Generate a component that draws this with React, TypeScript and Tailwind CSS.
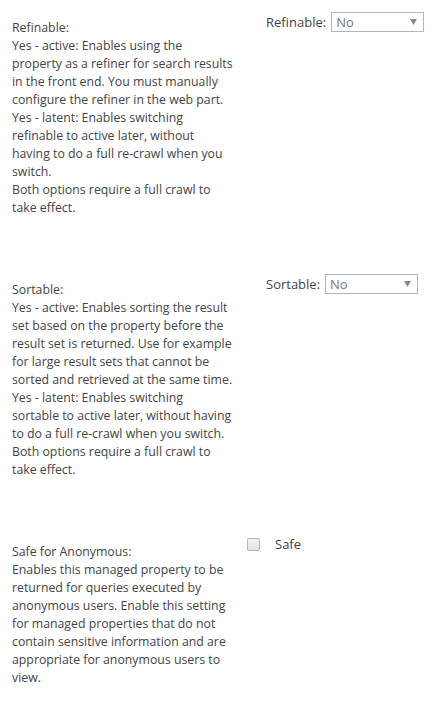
import React from "react";

const font = { fontFamily: '"Open Sans", "Segoe UI", sans-serif' };

const refinable = [
  "Refinable:",
  "Yes - active: Enables using the",
  "property as a refiner for search results",
  "in the front end. You must manually",
  "configure the refiner in the web part.",
  "Yes - latent: Enables switching",
  "refinable to active later, without",
  "having to do a full re-crawl when you",
  "switch.",
  "Both options require a full crawl to",
  "take effect.",
];

const sortable = [
  "Sortable:",
  "Yes - active: Enables sorting the result",
  "set based on the property before the",
  "result set is returned. Use for example",
  "for large result sets that cannot be",
  "sorted and retrieved at the same time.",
  "Yes - latent: Enables switching",
  "sortable to active later, without having",
  "to do a full re-crawl when you switch.",
  "Both options require a full crawl to",
  "take effect.",
];

const safe = [
  "Safe for Anonymous:",
  "Enables this managed property to be",
  "returned for queries executed by",
  "anonymous users. Enable this setting",
  "for managed properties that do not",
  "contain sensitive information and are",
  "appropriate for anonymous users to",
  "view.",
];

function Lines({ lines }: { lines: string[] }) {
  return (
    <>
      {lines.map((l, i) => (
        <div key={i} className="whitespace-nowrap">
          {l}
        </div>
      ))}
    </>
  );
}

function SelectBox({ label }: { label: string }) {
  return (
    <div className="flex items-center gap-[5px]">
      <span className="text-[13px] text-[#444]">{label}</span>
      <div className="flex h-[20px] w-[93px] items-center justify-between border border-[#a9b8c9] bg-white pl-[4px] pr-[6px]">
        <span className="text-[13px] leading-none text-[#777]">No</span>
        <svg width="7" height="6" viewBox="0 0 7 6">
          <path d="M0 0h7L3.5 6z" fill="#888" />
        </svg>
      </div>
    </div>
  );
}

export default function App() {
  return (
    <div className="min-h-[706px] w-[446px] bg-white text-[12.3px] leading-[18px] text-[#444]" style={font}>
      {/* Refinable */}
      <div className="flex items-start">
        <div className="w-[234px] pl-[12px] pt-[19px]">
          <Lines lines={refinable} />
        </div>
        <div className="pl-[32px] pt-[12px]">
          <SelectBox label="Refinable:" />
        </div>
      </div>

      {/* Sortable */}
      <div className="mt-[57px] flex items-start">
        <div className="w-[234px] pl-[12px] pt-[7px]">
          <Lines lines={sortable} />
        </div>
        <div className="pl-[32px]">
          <SelectBox label="Sortable:" />
        </div>
      </div>

      {/* Safe for Anonymous */}
      <div className="mt-[56px] flex items-start">
        <div className="w-[234px] pl-[12px] pt-[8px]">
          <Lines lines={safe} />
        </div>
        <div className="flex items-center gap-[15px] pl-[13px]">
          <span className="block h-[13px] w-[13px] rounded-[2px] border border-[#b5b5b5] bg-gradient-to-b from-[#f4f4f4] to-[#e2e2e2]" />
          <span className="text-[13px] text-[#444]">Safe</span>
        </div>
      </div>
    </div>
  );
}
